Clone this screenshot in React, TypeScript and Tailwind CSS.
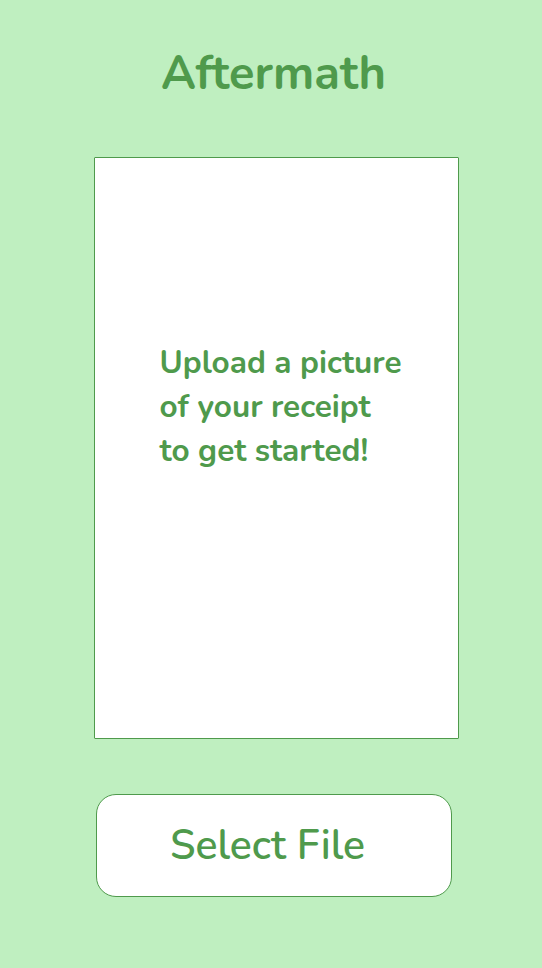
export default function App() {
  return (
    <div
      className="w-[542px] h-[968px] bg-[#bfefc0] flex flex-col items-center text-[#4f9a4c]"
      style={{ fontFamily: "Nunito, 'Lato', 'Open Sans', sans-serif" }}
    >
      <h1 className="mt-[46px] ml-[5px] h-[56px] text-[47px] leading-[56px] font-bold">Aftermath</h1>
      <div className="mt-[55px] ml-[10px] w-[365px] h-[582px] bg-white border border-[#4f9a4c] rounded-[1px] flex flex-col pl-[65px] pt-[183px]">
        <p className="text-[31.5px] leading-[44px] font-bold w-[295px]">
          Upload a picture
          <br />
          of your receipt
          <br />
          to get started!
        </p>
      </div>
      <button className="mt-[55px] ml-[5px] w-[356px] h-[103px] bg-white border-[1.5px] border-[#4f9a4c] rounded-[20px] flex items-center justify-center pr-[12px]">
        <span className="text-[41px] font-semibold text-[#4f9a4c]">Select File</span>
      </button>
    </div>
  );
}
